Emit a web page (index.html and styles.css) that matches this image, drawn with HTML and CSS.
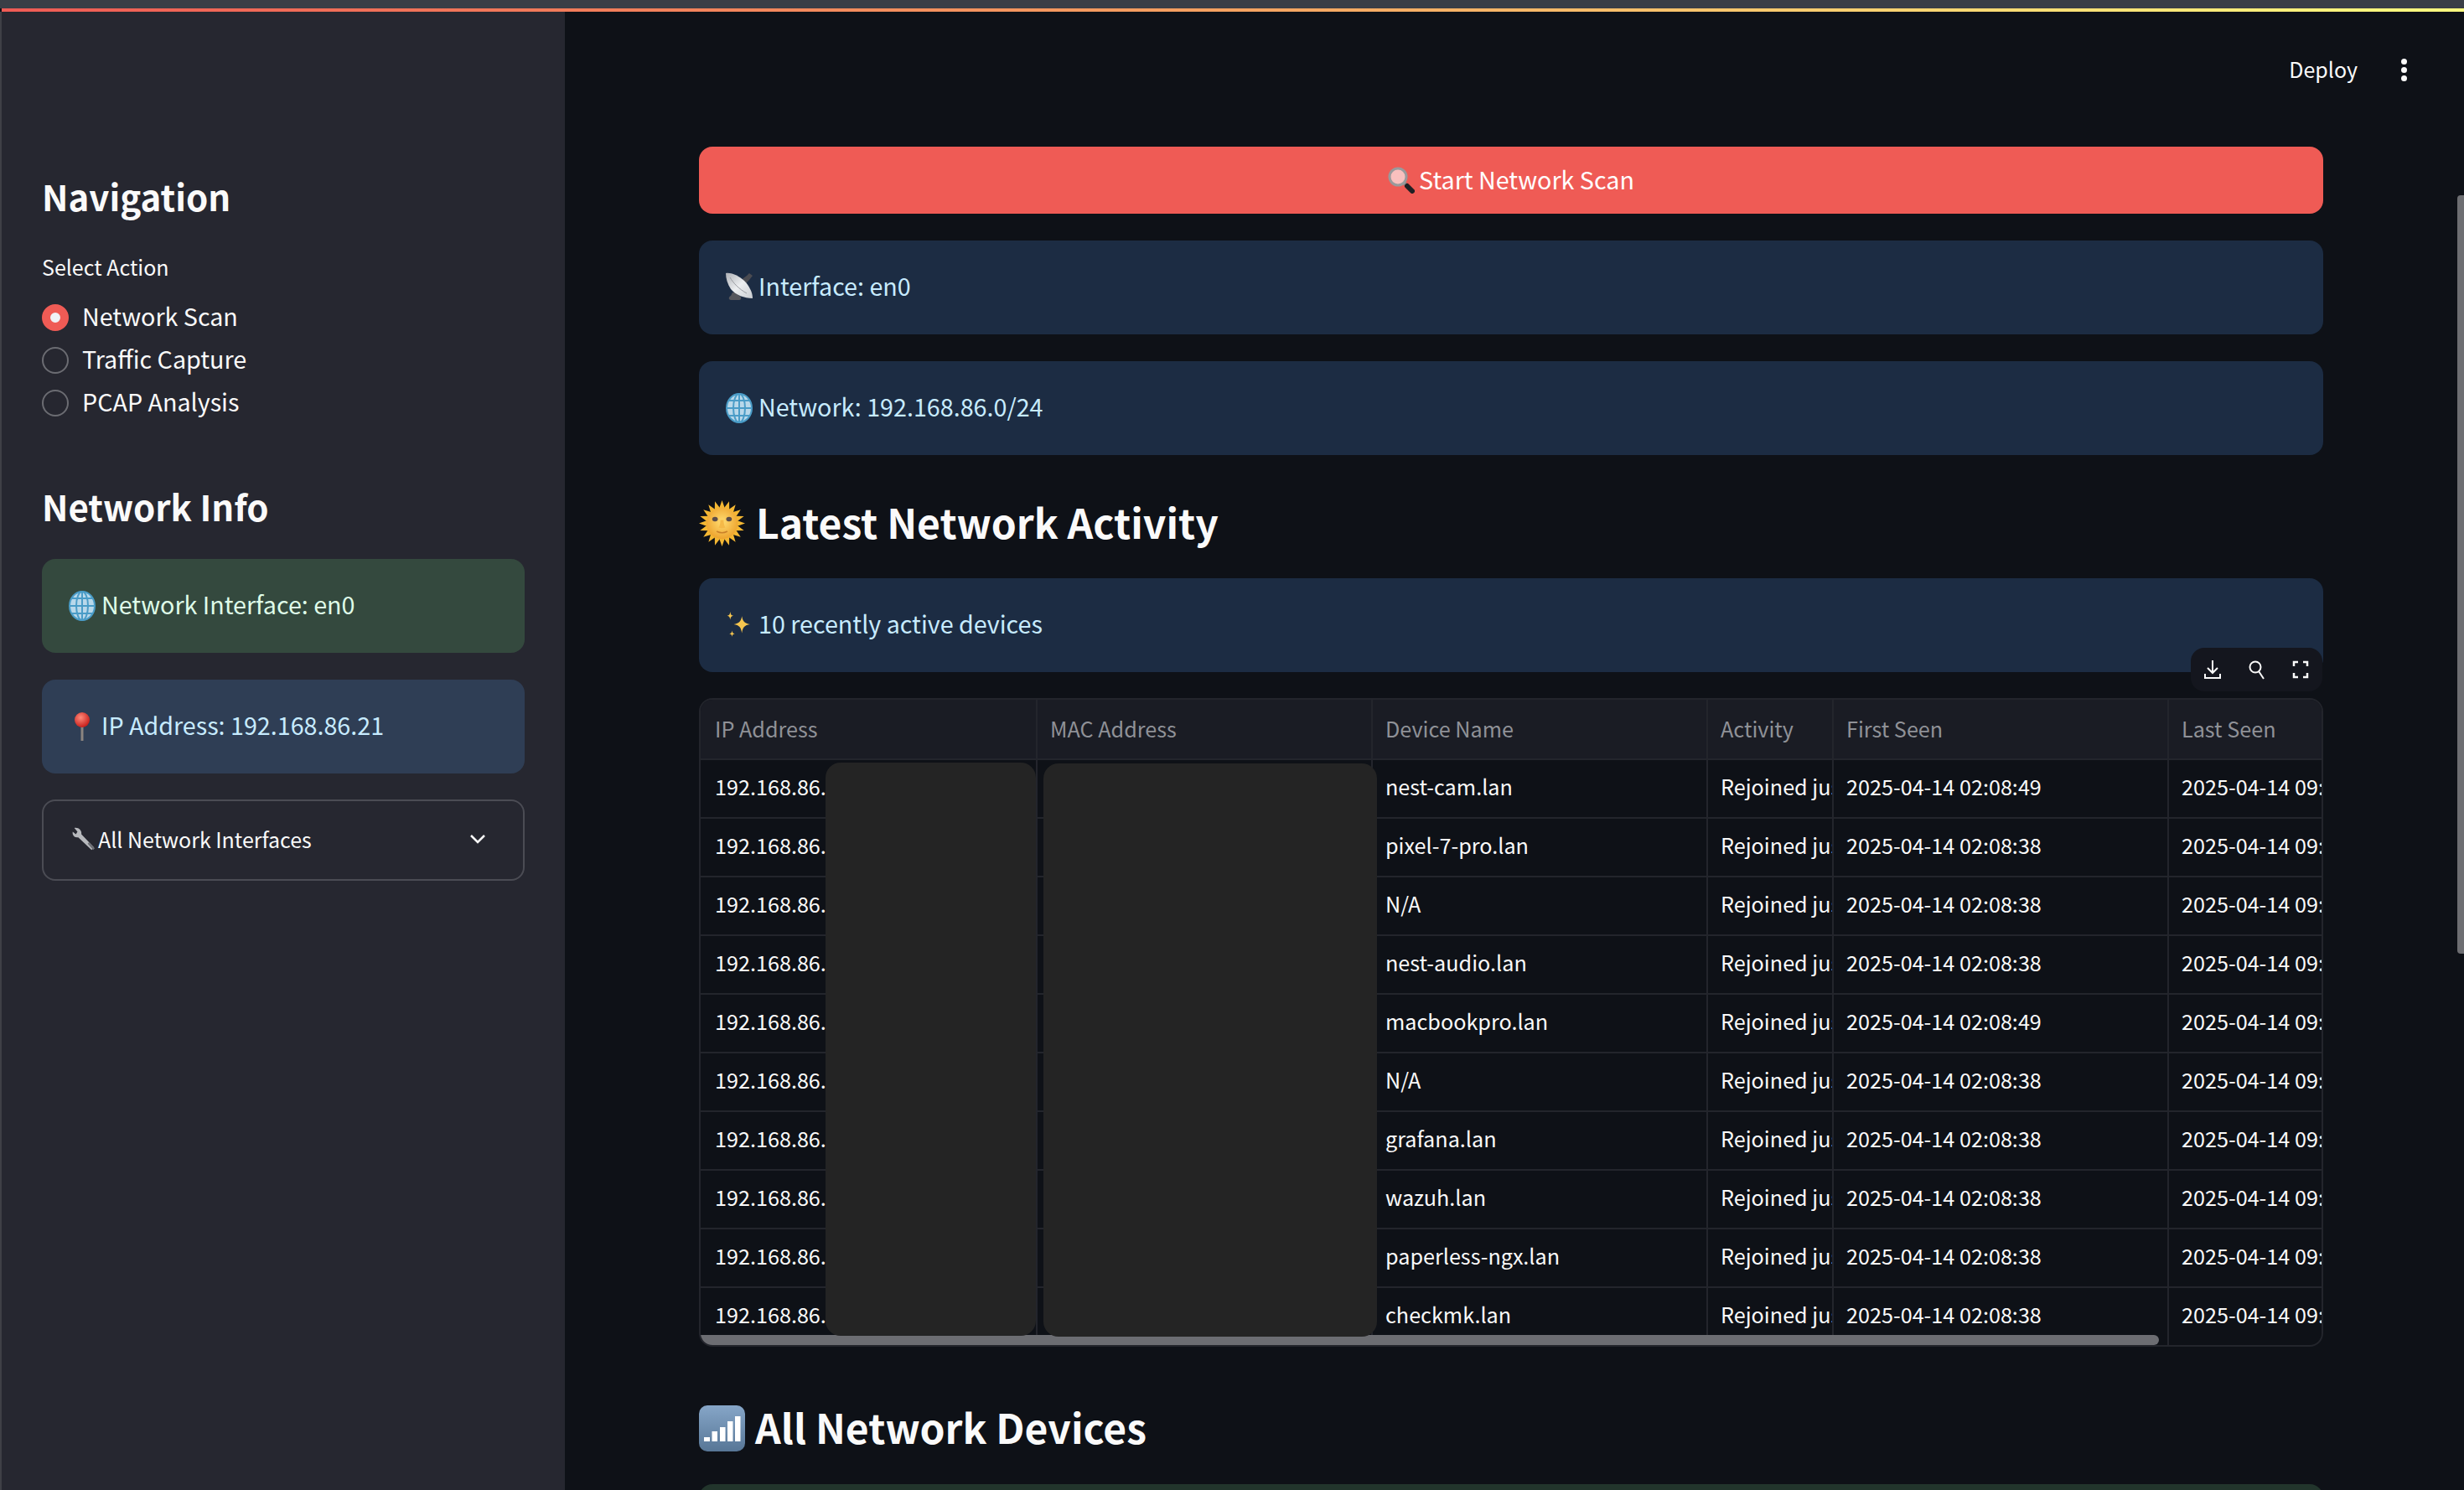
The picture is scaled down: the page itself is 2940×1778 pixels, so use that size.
FILE: index.html
```html
<!DOCTYPE html>
<html lang="en">
<head>
<meta charset="UTF-8">
<meta name="viewport" content="width=device-width, initial-scale=1.0">
<title>Network Scanner</title>
<link rel="stylesheet" href="styles.css">
</head>
<body>
    <svg class="defs" width="0" height="0">
        <defs>
            <radialGradient id="sunFill" cx="50%" cy="45%" r="55%">
                <stop offset="0" stop-color="#ffdc72"/>
                <stop offset="1" stop-color="#eea42e"/>
            </radialGradient>
            <radialGradient id="pinFill" cx="40%" cy="35%" r="65%">
                <stop offset="0" stop-color="#ff8a7a"/>
                <stop offset="1" stop-color="#c8201c"/>
            </radialGradient>
            <linearGradient id="barFill" x1="0" y1="0" x2="0" y2="1">
                <stop offset="0" stop-color="#86a6c8"/>
                <stop offset="1" stop-color="#577696"/>
            </linearGradient>
            <linearGradient id="dishFill" x1="0" y1="0" x2="1" y2="1">
                <stop offset="0" stop-color="#aeb1b6"/>
                <stop offset="0.5" stop-color="#eceef0"/>
                <stop offset="1" stop-color="#c9ccd0"/>
            </linearGradient>
            <symbol id="globe" viewBox="0 0 32 36">
                <ellipse cx="16" cy="18" rx="15" ry="17" fill="#b9d8ea"/>
                <g fill="none" stroke="#4a9cc7" stroke-width="2">
                    <ellipse cx="16" cy="18" rx="15" ry="17"/>
                    <ellipse cx="16" cy="18" rx="7" ry="17"/>
                    <path d="M16 1v34M1 18h30M4 9h24M4 27h24"/>
                </g>
            </symbol>
            <symbol id="pin" viewBox="0 0 32 36">
                <path d="M16 16v19" stroke="#8b8480" stroke-width="3"/>
                <circle cx="16" cy="10" r="9" fill="url(#pinFill)"/>
            </symbol>
            <symbol id="wrench" viewBox="0 0 32 32">
                <path d="M5 2l4 5-2 3-4-3c-1 4 2 8 7 7l17 16 3-3L14 10c1-5-4-9-9-8z" fill="#b7b9bd"/>
                <path d="M22 22l7 8 2-2-7-8z" fill="#6d6f75"/>
            </symbol>
            <symbol id="lens" viewBox="0 0 32 32">
                <path d="M19 19l3 3" stroke="#8a8a8a" stroke-width="4"/>
                <path d="M23 23l6 6" stroke="#1f2024" stroke-width="6" stroke-linecap="round"/>
                <circle cx="12" cy="12" r="10" fill="#fff" fill-opacity=".62" stroke="#9a9a9c" stroke-width="3"/>
            </symbol>
            <symbol id="dish" viewBox="0 0 32 36">
                <path d="M8 24l-2 4c-3 1-3 5 0 5h10c3 0 3-4 0-5l-3-4z" fill="#55565c"/>
                <path d="M17 10l8-6 3-3 4 3-4 5-7 7z" fill="#4a4b51"/>
                <path d="M0 1C8 0 16 5 22 10c6 6 10 14 10 21-10 0-20-4-26-11C2 14 0 7 0 1z" fill="url(#dishFill)"/>
                <path d="M5 6c4 7 11 14 20 19" fill="none" stroke="#9a9da2" stroke-width="1"/>
            </symbol>
            <symbol id="sun" viewBox="0 0 54 56">
                <g fill="#f4b733">
                    <path id="ray" d="M27 0l-3.500 10h7zM27 56l-3.500-10h7z"/>
                    <use href="#ray" transform="rotate(18 27 28)"/>
                    <use href="#ray" transform="rotate(36 27 28)"/>
                    <use href="#ray" transform="rotate(54 27 28)"/>
                    <use href="#ray" transform="rotate(72 27 28)"/>
                    <use href="#ray" transform="rotate(90 27 28)"/>
                    <use href="#ray" transform="rotate(108 27 28)"/>
                    <use href="#ray" transform="rotate(126 27 28)"/>
                    <use href="#ray" transform="rotate(144 27 28)"/>
                    <use href="#ray" transform="rotate(162 27 28)"/>
                </g>
                <circle cx="27" cy="28" r="19" fill="url(#sunFill)"/>
                <ellipse cx="18.500" cy="23" rx="3.400" ry="2.800" fill="#5c4d4a"/>
                <ellipse cx="35.500" cy="23" rx="3.400" ry="2.800" fill="#5c4d4a"/>
                <path d="M25 24c0 4-1 8-2 9 2 1 6 1 8 0-1-1-2-5-2-9" fill="#f5b948"/>
                <path d="M21 38c4 2 8 2 12 0" fill="none" stroke="#c9802a" stroke-width="1.600" stroke-linecap="round"/>
            </symbol>
            <symbol id="sparkle" viewBox="0 0 30 30">
                <path fill="#f6c64f" d="M18 5c1 6 3 8 9 9-6 1-8 3-9 10-1-7-3-9-9-10 6-1 8-3 9-9z"/>
                <path fill="#f6c64f" d="M5 0c.5 3 1 4 3.500 4.500C6 5 5.500 6 5 9 4.500 6 4 5 1.500 4.500 4 4 4.500 3 5 0zM7 21c.4 2.400.8 3 3 3.500-2.200.5-2.600 1-3 3.500-.4-2.500-.8-3-3-3.500 2.200-.5 2.600-1.100 3-3.500z"/>
            </symbol>
            <symbol id="bars" viewBox="0 0 55 55">
                <rect x="0" y="0" width="55" height="55" rx="10" fill="url(#barFill)"/>
                <path fill="#fff" d="M6 38h7v5H6zM15.500 31h6.500v12h-6.500zM25 26h6.500v17H25zM34 19h6.500v24H34zM43 13h6.500v30H43z"/>
            </symbol>
        </defs>
    </svg>

    <div class="topstrip"></div>
    <div class="rainbow"></div>

    <div class="app">
        <aside class="sidebar">
            <h2 class="side-title">Navigation</h2>
            <div class="field-label">Select Action</div>
            <div class="radio-row"><span class="radio on"></span><span class="radio-text">Network Scan</span></div>
            <div class="radio-row"><span class="radio"></span><span class="radio-text">Traffic Capture</span></div>
            <div class="radio-row"><span class="radio"></span><span class="radio-text">PCAP Analysis</span></div>

            <h2 class="side-title info-title">Network Info</h2>
            <div class="alert green">
                <svg class="emoji"><use href="#globe"/></svg>
                <span>Network Interface: en0</span>
            </div>
            <div class="alert side-blue">
                <svg class="emoji"><use href="#pin"/></svg>
                <span>IP Address: 192.168.86.21</span>
            </div>
            <div class="expander">
                <svg class="emoji-small"><use href="#wrench"/></svg>
                <span class="expander-text">All Network Interfaces</span>
                <svg class="chevron" viewBox="0 0 20 12"><path d="M2 2l8 8 8-8" fill="none" stroke="#fafafa" stroke-width="2.500"/></svg>
            </div>
        </aside>

        <main class="main">
            <div class="header">
                <span class="deploy">Deploy</span>
                <span class="dots"><i></i><i></i><i></i></span>
            </div>

            <button class="scan-btn" type="button">
                <svg class="emoji lens"><use href="#lens"/></svg>
                Start Network Scan
            </button>

            <div class="alert blue mt">
                <svg class="emoji"><use href="#dish"/></svg>
                <span>Interface: en0</span>
            </div>
            <div class="alert blue mt">
                <svg class="emoji"><use href="#globe"/></svg>
                <span>Network: 192.168.86.0/24</span>
            </div>

            <h2 class="section-title first">
                <svg class="emoji-big"><use href="#sun"/></svg>
                Latest Network Activity
            </h2>

            <div class="alert blue recent">
                <svg class="emoji"><use href="#sparkle"/></svg>
                <span>10 recently active devices</span>
            </div>

            <section class="table-box">
                <div class="toolbar">
                    <svg viewBox="0 0 20 24"><path d="M10 1v15M4 10l6 6 6-6M1 17v5h18v-5" fill="none" stroke="#fafafa" stroke-width="2"/></svg>
                    <svg viewBox="0 0 20 24"><circle cx="8" cy="9" r="6.500" fill="none" stroke="#fafafa" stroke-width="2"/><path d="M12 14l6 9" stroke="#fafafa" stroke-width="2"/></svg>
                    <svg viewBox="0 0 20 24"><path d="M7 3H2v5M13 3h5v5M7 21H2v-5M13 21h5v-5" fill="none" stroke="#fafafa" stroke-width="2.500"/></svg>
                </div>

                <div class="table-wrap">
                    <table class="devices">
                        <colgroup>
                            <col class="c-wide"><col class="c-mid"><col class="c-mid"><col class="c-small"><col class="c-mid"><col class="c-last">
                        </colgroup>
                        <thead>
                            <tr><th>IP Address</th><th>MAC Address</th><th>Device Name</th><th>Activity</th><th>First Seen</th><th>Last Seen</th></tr>
                        </thead>
                        <tbody>
                            <tr><td>192.168.86.</td><td></td><td>nest-cam.lan</td><td>Rejoined just now</td><td>2025-04-14 02:08:49</td><td>2025-04-14 09:</td></tr>
                            <tr><td>192.168.86.</td><td></td><td>pixel-7-pro.lan</td><td>Rejoined just now</td><td>2025-04-14 02:08:38</td><td>2025-04-14 09:</td></tr>
                            <tr><td>192.168.86.</td><td></td><td>N/A</td><td>Rejoined just now</td><td>2025-04-14 02:08:38</td><td>2025-04-14 09:</td></tr>
                            <tr><td>192.168.86.</td><td></td><td>nest-audio.lan</td><td>Rejoined just now</td><td>2025-04-14 02:08:38</td><td>2025-04-14 09:</td></tr>
                            <tr><td>192.168.86.</td><td></td><td>macbookpro.lan</td><td>Rejoined just now</td><td>2025-04-14 02:08:49</td><td>2025-04-14 09:</td></tr>
                            <tr><td>192.168.86.</td><td></td><td>N/A</td><td>Rejoined just now</td><td>2025-04-14 02:08:38</td><td>2025-04-14 09:</td></tr>
                            <tr><td>192.168.86.</td><td></td><td>grafana.lan</td><td>Rejoined just now</td><td>2025-04-14 02:08:38</td><td>2025-04-14 09:</td></tr>
                            <tr><td>192.168.86.</td><td></td><td>wazuh.lan</td><td>Rejoined just now</td><td>2025-04-14 02:08:38</td><td>2025-04-14 09:</td></tr>
                            <tr><td>192.168.86.</td><td></td><td>paperless-ngx.lan</td><td>Rejoined just now</td><td>2025-04-14 02:08:38</td><td>2025-04-14 09:</td></tr>
                            <tr><td>192.168.86.</td><td></td><td>checkmk.lan</td><td>Rejoined just now</td><td>2025-04-14 02:08:38</td><td>2025-04-14 09:</td></tr>
                        </tbody>
                    </table>
                    <div class="h-scroll"></div>
                </div>
                <div class="redact redact-ip"></div>
                <div class="redact redact-mac"></div>
            </section>

            <h2 class="section-title second">
                <svg class="emoji-big"><use href="#bars"/></svg>
                All Network Devices
            </h2>

            <div class="alert dark-green"></div>

            <div class="v-scroll"></div>
        </main>
    </div>
</body>
</html>
```

FILE: styles.css
```css
* {
    box-sizing: border-box;
}

html,
body {
    height: 100%;
    overflow: hidden;
}

body {
    margin: 0;
    background-color: #0e1117;
    color: #fafafa;
    font-family: "Noto Sans CJK SC", "Open Sans", sans-serif;
    font-size: 28.7px;
    line-height: 44px;
}

.defs {
    position: absolute;
}

.topstrip {
    height: 10px;
    background-color: #3a3e46;
}

.rainbow {
    height: 4px;
    margin-left: 2px;
    background: linear-gradient(90deg, #ef5b55, #f4a261 50%, #fffd80);
}

.app {
    display: flex;
    height: calc(100% - 14px);
    overflow: hidden;
    border-left: 2px solid #3f4046;
}

/* sidebar */

.sidebar {
    width: 672px;
    flex-shrink: 0;
    padding: 190px 48px 0 48px;
    background-color: #262730;
}

.side-title {
    margin: 0;
    font-size: 42px;
    font-weight: 600;
    line-height: 60px;
}

.field-label {
    margin-top: 34px;
    margin-bottom: 15px;
    font-size: 25px;
    line-height: 40px;
}

.radio-row {
    display: flex;
    align-items: center;
    height: 51px;
    gap: 16px;
}

.radio-text {
    margin-bottom: 4px;
}

.radio {
    width: 32px;
    height: 32px;
    border: 2px solid #6b6c72;
    border-radius: 50%;
}

.radio.on {
    border: 10px solid #ef5b55;
    background-color: #f0f2f6;
}

.info-title {
    margin-top: 68px;
    margin-bottom: 33px;
}

.alert {
    display: flex;
    align-items: center;
    gap: 7px;
    height: 112px;
    padding: 30px 32px 34px;
    border-radius: 16px;
}

.alert + .alert {
    margin-top: 32px;
}

.green {
    background-color: #34493e;
    color: #dffde9;
}

.side-blue {
    background-color: #2f3e55;
    color: #c7ebff;
}

.blue {
    background-color: #1c2c43;
    color: #c7ebff;
}

.dark-green {
    margin-top: 31px;
    background-color: #22352c;
}

.emoji {
    width: 32px;
    height: 36px;
    flex-shrink: 0;
    margin-top: 4px;
}

.emoji-small {
    width: 30px;
    height: 30px;
    flex-shrink: 0;
}

.expander {
    display: flex;
    align-items: center;
    height: 97px;
    margin-top: 31px;
    padding: 0 44px 4px 32px;
    border: 2px solid #4b4c54;
    border-radius: 16px;
    font-size: 25px;
}

.expander-text {
    flex: 1;
    margin-left: 3px;
}

.chevron {
    width: 20px;
    height: 12px;
}

/* main */

.main {
    position: relative;
    flex: 1;
    min-width: 0;
    padding: 34px 168px 0 160px;
}

.header {
    display: flex;
    justify-content: flex-end;
    align-items: center;
    height: 70px;
    margin-right: -100px;
    gap: 52px;
    font-size: 25px;
}

.deploy {
    margin-bottom: 2px;
}

.dots {
    display: flex;
    flex-direction: column;
    gap: 3px;
}

.dots i {
    width: 7px;
    height: 7px;
    border-radius: 50%;
    background-color: #fafafa;
}

.scan-btn {
    display: flex;
    justify-content: center;
    align-items: center;
    gap: 5px;
    width: 100%;
    height: 80px;
    margin-top: 57px;
    padding-bottom: 3px;
    border: none;
    border-radius: 16px;
    background-color: #ef5b55;
    color: #fff;
    font-family: inherit;
    font-size: 28.7px;
    line-height: 44px;
}

.lens {
    width: 32px;
    height: 32px;
    margin-top: 2px;
}

.mt {
    margin-top: 32px;
}

.section-title {
    display: flex;
    align-items: center;
    gap: 13px;
    margin: 0;
    font-size: 48px;
    font-weight: 600;
    line-height: 76px;
}

.section-title.first {
    margin-top: 41px;
}

.section-title.second {
    margin-top: 57px;
    gap: 12px;
}

.emoji-big {
    width: 55px;
    height: 55px;
    flex-shrink: 0;
    margin-top: 4px;
}

.recent {
    margin-top: 30px;
}

/* data table */

.table-box {
    position: relative;
    height: 774px;
    margin-top: 31px;
}

.table-wrap {
    position: relative;
    height: 100%;
    overflow: hidden;
    border: 2px solid #23252c;
    border-radius: 16px;
}

.devices {
    width: 2151px;
    border-collapse: collapse;
    table-layout: fixed;
    font-size: 25.2px;
    line-height: 32px;
}

.c-wide {
    width: 401px;
}

.c-mid {
    width: 400px;
}

.c-small {
    width: 150px;
}

.c-last {
    width: 400px;
}

.devices th,
.devices td {
    height: 70px;
    padding: 0 0 6px 15px;
    border: 2px solid #23252c;
    overflow: hidden;
    text-align: left;
    white-space: nowrap;
}

.devices th {
    height: 71px;
    padding-bottom: 3px;
    background-color: #1a1c24;
    color: #8f9197;
    font-weight: 400;
    border-top: none;
}

.devices tr > :first-child {
    border-left: none;
    padding-left: 17px;
}

.h-scroll {
    position: absolute;
    left: 0;
    bottom: 0;
    width: 1740px;
    height: 12px;
    border-radius: 0 6px 6px 6px;
    background-color: #6c6d72;
}

.redact {
    position: absolute;
    height: 684px;
    border-radius: 18px;
    background-color: #242424;
}

.redact-ip {
    top: 77px;
    left: 151px;
    width: 251px;
}

.redact-mac {
    top: 78px;
    left: 411px;
    width: 398px;
}

.toolbar {
    position: absolute;
    z-index: 1;
    top: -60px;
    right: 1px;
    display: flex;
    justify-content: space-between;
    align-items: center;
    width: 157px;
    height: 52px;
    padding: 0 16px;
    border-radius: 16px;
    background-color: #14161e;
}

.toolbar svg {
    width: 20px;
    height: 24px;
}

.v-scroll {
    position: absolute;
    top: 219px;
    right: 0;
    width: 8px;
    height: 905px;
    border-radius: 4px 0 0 4px;
    background-color: #6d6e72;
}
```
